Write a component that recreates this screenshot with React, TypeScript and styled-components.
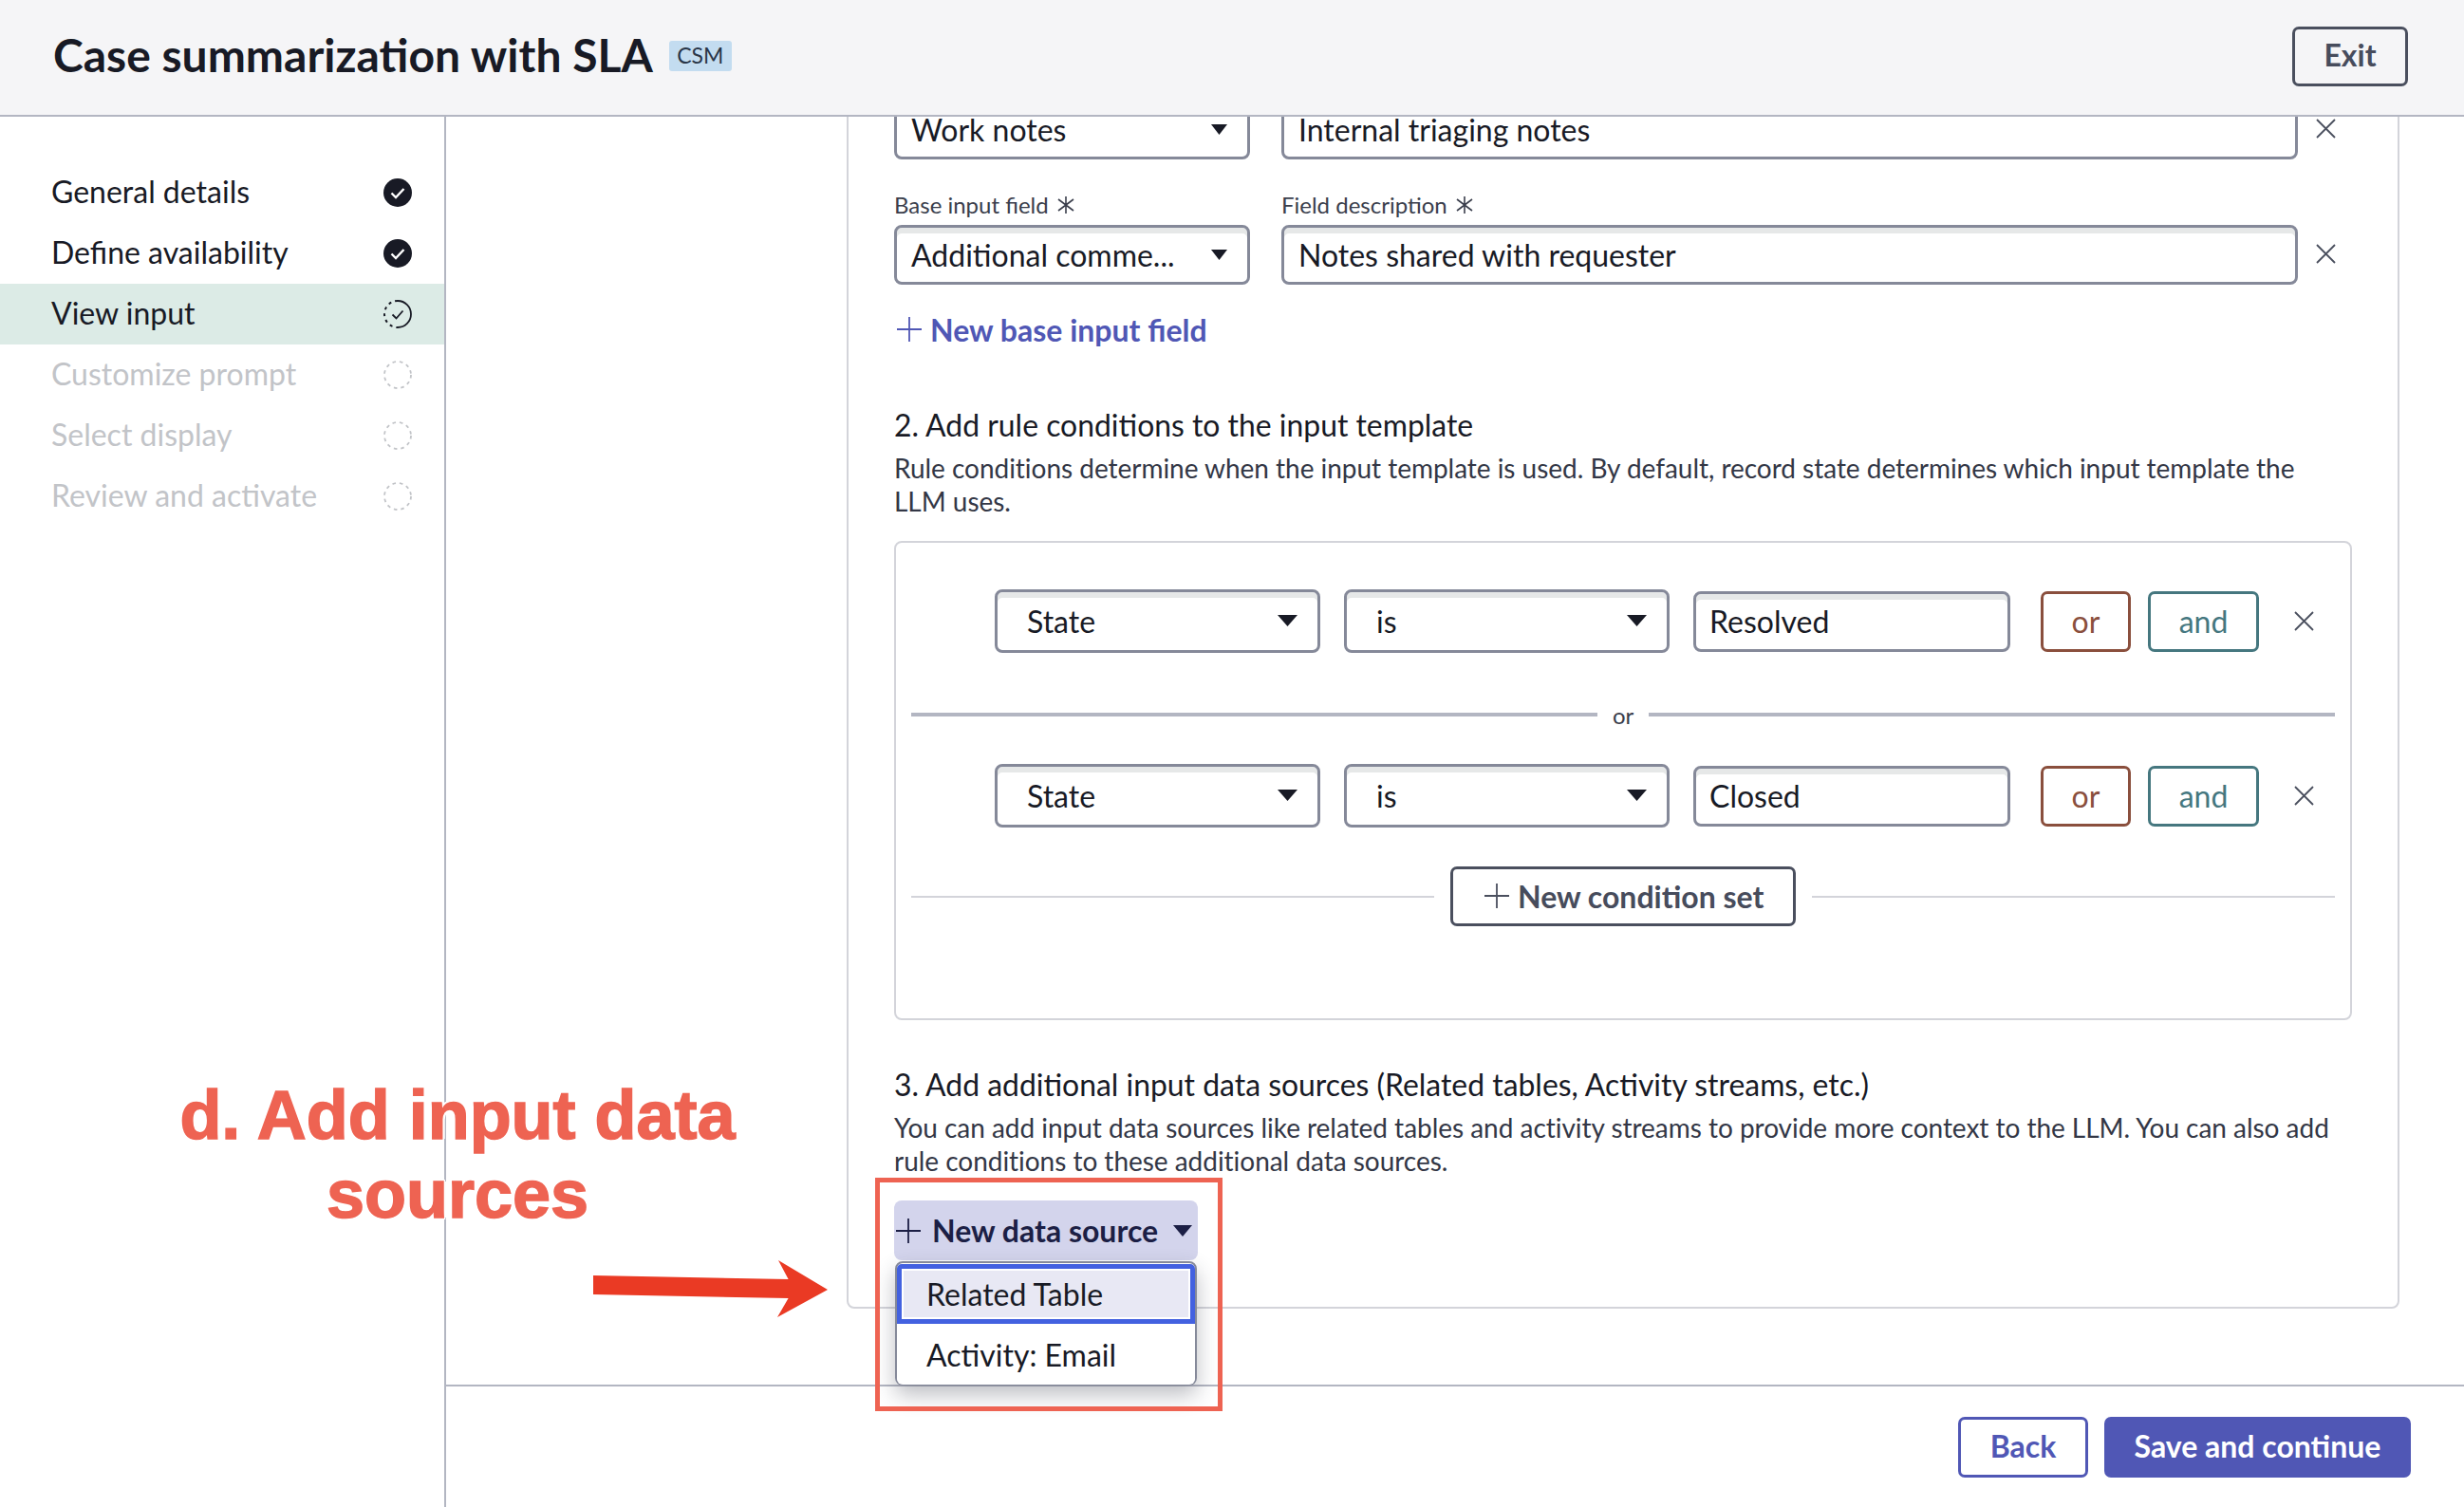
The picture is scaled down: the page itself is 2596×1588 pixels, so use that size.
import styled, { createGlobalStyle } from 'styled-components';

const GlobalStyle = createGlobalStyle`
  * {
    box-sizing: border-box;
  }
  html,
  body {
    margin: 0;
    background: #fff;
    font-family: Lato, 'Open Sans', sans-serif;
    color: #181a25;
  }
`;

const Page = styled.div`
  position: relative;
  width: 2596px;
  height: 1588px;
  overflow: hidden;
  background: #fff;
`;

const Header = styled.header`
  position: relative;
  z-index: 2;
  height: 123px;
  display: flex;
  align-items: center;
  padding: 0 59px 3px 56px;
  background: #f5f5f7;
  border-bottom: 2px solid #b3b6c2;
`;

const Title = styled.h1`
  margin: 0 0 3px;
  font-size: 48px;
  font-weight: 700;
  line-height: 60px;
  color: #181a25;
`;

const Badge = styled.span`
  margin-left: 17px;
  width: 66px;
  height: 32px;
  padding-bottom: 2px;
  display: flex;
  align-items: center;
  justify-content: center;
  border-radius: 3px;
  background: #c3dcf0;
  font-size: 23px;
  color: #2a3648;
`;

const ExitButton = styled.button`
  margin-left: auto;
  width: 122px;
  height: 63px;
  padding: 0 0 3px;
  border: 3px solid #4a4f5e;
  border-radius: 7px;
  background: transparent;
  font-family: inherit;
  font-size: 32px;
  font-weight: 700;
  color: #474c5c;
`;

const Body = styled.div`
  display: flex;
  height: 1465px;
`;

const Sidebar = styled.nav`
  flex: 0 0 470px;
  padding-top: 48px;
  border-right: 2px solid #b3b6c2;
`;

const Step = styled.div<{ $active?: boolean; $disabled?: boolean }>`
  height: 64px;
  display: flex;
  align-items: center;
  justify-content: space-between;
  padding: 0 34px 0 54px;
  font-size: 32px;
  background: ${(p) => (p.$active ? '#dcebe6' : 'transparent')};
  color: ${(p) => (p.$disabled ? '#c2c4c8' : '#181a25')};
`;

const StepName = styled.span`
  margin-bottom: 3px;
`;

const Main = styled.main`
  flex: 1;
  display: flex;
  flex-direction: column;
`;

const Scroller = styled.div`
  flex: 1;
  padding-left: 422px;
`;

const Panel = styled.section`
  width: 1636px;
  height: 1338px;
  margin-top: -82px;
  padding: 62px 49px 0 48px;
  border: 2px solid #d3d4da;
  border-radius: 8px;
`;

const FieldRow = styled.div`
  display: flex;
  align-items: flex-end;
  margin-bottom: 34px;

  &:nth-of-type(2) {
    margin-bottom: 28px;
  }
`;

const Field = styled.div<{ $width: number }>`
  flex: 0 0 ${(p) => p.$width}px;
  margin-right: 19px;

  &:first-child {
    margin-right: 33px;
  }
`;

const Label = styled.div`
  height: 30px;
  margin-bottom: 5px;
  padding-bottom: 3px;
  display: flex;
  align-items: center;
  gap: 8px;
  font-size: 24px;
  color: #3a3e4c;
`;

const FormBox = styled.div<{ $height?: number; $pad?: number }>`
  height: ${(p) => p.$height ?? 63}px;
  display: flex;
  align-items: center;
  justify-content: space-between;
  padding: 0 21px 1px ${(p) => p.$pad ?? 15}px;
  border: 3px solid #858999;
  border-radius: 8px;
  box-shadow: inset 0 6px 0 #e6e8e8;
  background: #fff;
  font-size: 32px;
  white-space: nowrap;
  color: #181a25;
`;

const CloseIcon = styled.svg`
  flex: none;
  width: 21px;
  height: 21px;
`;

const FieldClose = styled(CloseIcon)`
  margin-bottom: 22px;
`;

const LinkButton = styled.button`
  height: 40px;
  margin: 0 0 60px;
  padding: 0 0 2px 3px;
  display: flex;
  align-items: center;
  gap: 9px;
  border: 0;
  background: none;
  font-family: inherit;
  font-size: 32px;
  font-weight: 700;
  color: #5057b5;
`;

const SectionTitle = styled.h2`
  margin: 0 0 8px;
  font-size: 31.9px;
  font-weight: 400;
  line-height: 40px;
  color: #181a25;
`;

const SectionText = styled.p`
  margin: 0 0 24px;
  font-size: 28px;
  letter-spacing: -0.03px;
  line-height: 35px;
  color: #333746;
`;

const RuleCard = styled.div`
  width: 1536px;
  height: 505px;
  margin: 2px 0 48px;
  padding: 49px 16px 0 16px;
  border: 2px solid #d3d4da;
  border-radius: 8px;
`;

const RuleRow = styled.div`
  height: 67px;
  display: flex;
  align-items: center;
  padding-left: 88px;
`;

const RuleSelect = styled(FormBox)<{ $w: number }>`
  flex: 0 0 ${(p) => p.$w}px;
  margin-right: 25px;
`;

const RuleInput = styled(FormBox)`
  flex: 0 0 334px;
  margin-right: 32px;
`;

const LogicButton = styled.button<{ $color: string; $w: number }>`
  width: ${(p) => p.$w}px;
  height: 64px;
  margin-right: 18px;
  padding: 0 0 1px;
  border: 3px solid ${(p) => p.$color};
  border-radius: 7px;
  background: #fff;
  font-family: inherit;
  font-size: 32px;
  color: ${(p) => p.$color};
`;

const RuleClose = styled.div`
  margin-left: 19px;
  display: flex;
`;

const OrDivider = styled.div`
  height: 40px;
  margin: 45px 0 32px;
  display: flex;
  align-items: center;
  gap: 16px;
  font-size: 24px;
  color: #3a3e4c;

  &::before,
  &::after {
    content: '';
    height: 4px;
    flex: 1;
    background: #b3b6c2;
  }
  &::before {
    flex: 0 0 723px;
  }
`;

const AddRow = styled.div`
  margin-top: 41px;
  display: flex;
  align-items: center;
  gap: 17px;

  &::before,
  &::after {
    content: '';
    height: 2px;
    flex: 1;
    background: #d3d4da;
  }
  &::before {
    flex: 0 0 551px;
  }
`;

const OutlineButton = styled.button`
  height: 63px;
  display: flex;
  align-items: center;
  justify-content: center;
  gap: 9px;
  padding: 0 31px 1px 33px;
  border: 3px solid #4a4f5e;
  border-radius: 7px;
  background: #fff;
  font-family: inherit;
  font-size: 32px;
  font-weight: 700;
  color: #474c5c;
`;

const BackButton = styled.button`
  width: 137px;
  height: 64px;
  padding: 0 0 3px;
  border: 3px solid #5057b5;
  border-radius: 7px;
  background: #fff;
  font-family: inherit;
  font-size: 32px;
  font-weight: 700;
  color: #5057b5;
`;

const SourceWrap = styled.div`
  position: relative;
  width: 320px;
`;

const SourceButton = styled.button`
  width: 320px;
  height: 63px;
  display: flex;
  align-items: center;
  padding: 0 6px 0 2px;
  border: 0;
  border-radius: 8px;
  background: #d3d4ec;
  font-family: inherit;
  font-size: 32px;
  font-weight: 700;
  color: #1c1f45;
`;

const SourceLabel = styled.span`
  flex: 1;
  margin-left: 12px;
  text-align: left;
`;

const Menu = styled.div`
  position: absolute;
  top: 64px;
  left: 1px;
  z-index: 5;
  width: 318px;
  height: 131px;
  padding-top: 1px;
  border: 2px solid #858999;
  border-radius: 8px;
  background: #fff;
  box-shadow: 0 10px 22px rgba(40, 44, 60, 0.3);
`;

const MenuItem = styled.div<{ $focused?: boolean }>`
  height: ${(p) => (p.$focused ? 63 : 64)}px;
  display: flex;
  align-items: center;
  padding-left: ${(p) => (p.$focused ? 26 : 31)}px;
  font-size: 32px;
  color: #181a25;
  border: ${(p) => (p.$focused ? '5px solid #4361e0' : '0')};
  border-radius: ${(p) => (p.$focused ? '5px 5px 0 0' : '0 0 6px 6px')};
  background: ${(p) => (p.$focused ? '#e8e8f4' : '#fff')};
  box-shadow: ${(p) => (p.$focused ? 'inset 0 0 0 2px #fff' : 'none')};
`;

const Footer = styled.footer`
  height: 129px;
  display: flex;
  justify-content: flex-end;
  align-items: flex-start;
  gap: 17px;
  padding: 32px 56px 0 0;
  border-top: 2px solid #b3b6c2;
`;

const PrimaryButton = styled.button`
  width: 323px;
  height: 64px;
  padding: 0 0 3px;
  border: 0;
  border-radius: 7px;
  background: #5057b5;
  font-family: inherit;
  font-size: 32px;
  font-weight: 700;
  color: #fff;
`;

const CalloutText = styled.div`
  position: absolute;
  z-index: 6;
  left: 142px;
  top: 1134px;
  width: 680px;
  text-align: center;
  font-family: 'Liberation Sans', Arial, sans-serif;
  font-size: 72px;
  font-weight: 700;
  line-height: 83px;
  color: #ee6352;
  -webkit-text-stroke: 1.5px #ee6352;
  text-shadow:
    3px 0 0 #fff,
    -3px 0 0 #fff,
    0 3px 0 #fff,
    0 -3px 0 #fff,
    2px 2px 0 #fff,
    -2px 2px 0 #fff,
    2px -2px 0 #fff,
    -2px -2px 0 #fff;
`;

const CalloutArrow = styled.svg`
  position: absolute;
  z-index: 6;
  left: 620px;
  top: 1320px;
  width: 260px;
  height: 76px;
`;

const CalloutFrame = styled.div`
  position: absolute;
  z-index: 6;
  left: 922px;
  top: 1241px;
  width: 366px;
  height: 246px;
  border: 5px solid #ee6352;
`;

const IconSvg = styled.svg`
  flex: none;
`;

const Caret = ({ w = 17, h = 11, color = '#181a25' }: { w?: number; h?: number; color?: string }) => (
  <IconSvg width={w} height={h} viewBox="0 0 20 12" preserveAspectRatio="none">
    <path d="M0 0h20L10 12z" fill={color} />
  </IconSvg>
);

const Plus = ({ color }: { color: string }) => (
  <IconSvg width="26" height="26" viewBox="0 0 26 26">
    <path d="M13 0v26M0 13h26" stroke={color} strokeWidth="1.8" fill="none" />
  </IconSvg>
);

const closePath = <path d="M1 1l19 19M20 1L1 20" stroke="#4a4f5e" strokeWidth="1.8" fill="none" />;

const Required = () => (
  <IconSvg width="20" height="18" viewBox="0 0 20 18">
    <path d="M10 0v18M2 3l16 12M18 3L2 15" stroke="#3a3e4c" strokeWidth="1.6" fill="none" />
  </IconSvg>
);

const StepIcon = ({ state }: { state: 'done' | 'current' | 'todo' }) => {
  if (state === 'done') {
    return (
      <IconSvg width="30" height="30" viewBox="0 0 30 30">
        <circle cx="15" cy="15" r="15" fill="#181a25" />
        <path d="M8.5 15.5l4.5 4.5 8.5-9" stroke="#fff" strokeWidth="2.4" fill="none" />
      </IconSvg>
    );
  }
  if (state === 'current') {
    return (
      <IconSvg width="30" height="30" viewBox="0 0 30 30">
        <path d="M15 1a14 14 0 0 1 0 28" stroke="#181a25" strokeWidth="1.8" fill="none" />
        <path
          d="M15 1a14 14 0 0 0 0 28"
          stroke="#181a25"
          strokeWidth="2"
          strokeDasharray="3 4"
          fill="none"
        />
        <path d="M9.5 15.5l4 4 7-8" stroke="#181a25" strokeWidth="1.8" fill="none" />
      </IconSvg>
    );
  }
  return (
    <IconSvg width="30" height="30" viewBox="0 0 30 30">
      <circle cx="15" cy="15" r="14" stroke="#c2c4c8" strokeWidth="1.8" strokeDasharray="3.5 4" fill="none" />
    </IconSvg>
  );
};

const steps: { name: string; icon: 'done' | 'current' | 'todo' }[] = [
  { name: 'General details', icon: 'done' },
  { name: 'Define availability', icon: 'done' },
  { name: 'View input', icon: 'current' },
  { name: 'Customize prompt', icon: 'todo' },
  { name: 'Select display', icon: 'todo' },
  { name: 'Review and activate', icon: 'todo' },
];

function ConditionRow({ value }: { value: string }) {
  return (
    <RuleRow>
      <RuleSelect $w={343} $height={67} $pad={31}>
        State
        <Caret w={21} h={12} />
      </RuleSelect>
      <RuleSelect $w={343} $height={67} $pad={31}>
        is
        <Caret w={21} h={12} />
      </RuleSelect>
      <RuleInput $height={64} $pad={14}>
        {value}
      </RuleInput>
      <LogicButton $color="#8a4f3d" $w={95}>
        or
      </LogicButton>
      <LogicButton $color="#45777f" $w={117}>
        and
      </LogicButton>
      <RuleClose>
        <CloseIcon viewBox="0 0 21 21">{closePath}</CloseIcon>
      </RuleClose>
    </RuleRow>
  );
}

function App() {
  return (
    <Page>
      <GlobalStyle />
      <Header>
        <Title>Case summarization with SLA</Title>
        <Badge>CSM</Badge>
        <ExitButton>Exit</ExitButton>
      </Header>
      <Body>
        <Sidebar>
          {steps.map((step) => (
            <Step key={step.name} $active={step.icon === 'current'} $disabled={step.icon === 'todo'}>
              <StepName>{step.name}</StepName>
              <StepIcon state={step.icon} />
            </Step>
          ))}
        </Sidebar>
        <Main>
          <Scroller>
            <Panel>
              <FieldRow>
                <Field $width={375}>
                  <FormBox>
                    Work notes
                    <Caret />
                  </FormBox>
                </Field>
                <Field $width={1071}>
                  <FormBox>Internal triaging notes</FormBox>
                </Field>
                <FieldClose viewBox="0 0 21 21">{closePath}</FieldClose>
              </FieldRow>
              <FieldRow>
                <Field $width={375}>
                  <Label>
                    Base input field <Required />
                  </Label>
                  <FormBox>
                    Additional comme...
                    <Caret />
                  </FormBox>
                </Field>
                <Field $width={1071}>
                  <Label>
                    Field description <Required />
                  </Label>
                  <FormBox>Notes shared with requester</FormBox>
                </Field>
                <FieldClose viewBox="0 0 21 21">{closePath}</FieldClose>
              </FieldRow>
              <LinkButton>
                <Plus color="#5057b5" />
                New base input field
              </LinkButton>

              <SectionTitle>2. Add rule conditions to the input template</SectionTitle>
              <SectionText>
                Rule conditions determine when the input template is used. By default, record state determines which
                input template the LLM uses.
              </SectionText>
              <RuleCard>
                <ConditionRow value="Resolved" />
                <OrDivider>or</OrDivider>
                <ConditionRow value="Closed" />
                <AddRow>
                  <OutlineButton>
                    <Plus color="#4a4f5e" />
                    New condition set
                  </OutlineButton>
                </AddRow>
              </RuleCard>

              <SectionTitle>3. Add additional input data sources (Related tables, Activity streams, etc.)</SectionTitle>
              <SectionText>
                You can add input data sources like related tables and activity streams to provide more context to the
                LLM. You can also add rule conditions to these additional data sources.
              </SectionText>
              <SourceWrap>
                <SourceButton>
                  <Plus color="#1c1f45" />
                  <SourceLabel>New data source</SourceLabel>
                  <Caret w={20} h={12} color="#1c1f45" />
                </SourceButton>
                <Menu>
                  <MenuItem $focused>Related Table</MenuItem>
                  <MenuItem>Activity: Email</MenuItem>
                </Menu>
              </SourceWrap>
            </Panel>
          </Scroller>
          <Footer>
            <BackButton>Back</BackButton>
            <PrimaryButton>Save and continue</PrimaryButton>
          </Footer>
        </Main>
      </Body>

      <CalloutText>
        d. Add input data
        <br />
        sources
      </CalloutText>
      <CalloutArrow viewBox="620 1320 260 76">
        <path
          d="M625 1344L830.6 1348L820 1328L872 1359L819 1388L830.6 1368L625 1364z"
          fill="#ea3a24"
        />
      </CalloutArrow>
      <CalloutFrame />
    </Page>
  );
}

export default App;
